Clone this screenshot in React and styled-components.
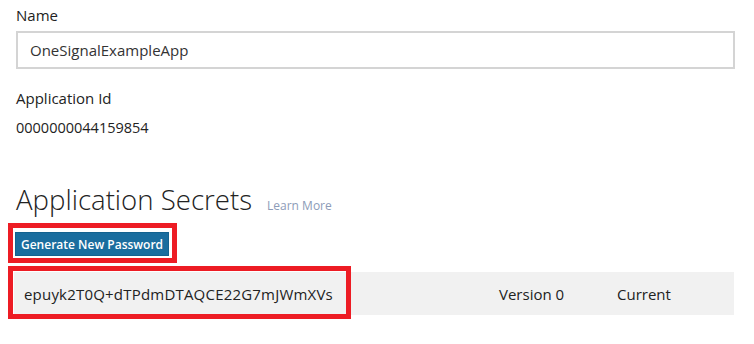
import React from "react";
import styled, { createGlobalStyle } from "styled-components";

const GlobalStyle = createGlobalStyle`
  html, body {
    margin: 0;
    padding: 0;
    background: #fff;
  }
  body {
    font-family: "Open Sans", "Noto Sans", sans-serif;
    color: #222;
  }
`;

let Page = styled.div`
  width: 754px;
  height: 344px;
  box-sizing: border-box;
  padding: 0 19px 0 16px;
  overflow: hidden;
`;

let FieldLabel = styled.div`
  font-size: 15px;
  line-height: 20px;
  margin-top: ${(p) => p.top || 0}px;
`;

let FieldValue = styled.div`
  font-size: 14.5px;
  line-height: 20px;
  margin-top: 10px;
`;

let TextInput = styled.input`
  display: block;
  width: 100%;
  height: 38px;
  box-sizing: border-box;
  margin-top: 6px;
  border: 2px solid #d4d4d4;
  padding: 0 12px;
  font-family: inherit;
  font-size: 15px;
  color: #333;
  outline: none;
`;

let TitleRow = styled.div`
  display: flex;
  align-items: baseline;
  gap: 15px;
  margin-top: 41px;
`;

let Title = styled.h2`
  margin: 0;
  font-size: 27.6px;
  font-weight: 300;
  line-height: 40px;
  color: #222;
`;

let LearnMore = styled.a`
  font-size: 12px;
  color: #8d9cb8;
  text-decoration: none;
`;

let Highlight = styled.div`
  display: inline-block;
  border: 5px solid #ed1c24;
  padding: 4px 3px 2px 2px;
  margin: 4px 0 0 -8px;
`;

let BlueButton = styled.button`
  display: block;
  height: 24px;
  padding: 0 5px;
  border: 1px solid #14628f;
  background: #1a6d9e;
  color: #fff;
  font-family: inherit;
  font-size: 12px;
  font-weight: 600;
  cursor: pointer;
`;

let SecretRow = styled.div`
  display: flex;
  align-items: stretch;
  height: 43px;
  margin: 9px 1px 0 -2px;
  background: #f1f1f1;
  font-size: 15px;
`;

let SecretCell = styled.div`
  position: relative;
  display: flex;
  align-items: center;
  flex: 0 0 ${(p) => p.w}px;
  padding-left: ${(p) => p.pad || 0}px;
  box-sizing: border-box;
  white-space: nowrap;

  ${(p) =>
    p.marked &&
    `
    letter-spacing: 0.2px;
    &::after {
      content: "";
      position: absolute;
      left: -6px;
      right: 0;
      top: -6px;
      bottom: -4px;
      border: 5px solid #ed1c24;
      pointer-events: none;
    }
  `}
`;

const secrets = [
  { key: "epuyk2T0Q+dTPdmDTAQCE22G7mJWmXVs", version: "Version 0", status: "Current" },
];

function App() {
  return (
    <>
      <GlobalStyle />
      <Page>
        <FieldLabel top={5}>Name</FieldLabel>
        <TextInput defaultValue="OneSignalExampleApp" />
        <FieldLabel top={19}>Application Id</FieldLabel>
        <FieldValue>0000000044159854</FieldValue>

        <TitleRow>
          <Title>Application Secrets</Title>
          <LearnMore href="#">Learn More</LearnMore>
        </TitleRow>

        <Highlight>
          <BlueButton>Generate New Password</BlueButton>
        </Highlight>

        {secrets.map((s) => (
          <SecretRow key={s.key}>
            <SecretCell w={337} pad={10} marked>
              {s.key}
            </SecretCell>
            <SecretCell w={266} pad={148}>
              {s.version}
            </SecretCell>
            <SecretCell w={117} pad={0}>
              {s.status}
            </SecretCell>
          </SecretRow>
        ))}
      </Page>
    </>
  );
}

export default App;
